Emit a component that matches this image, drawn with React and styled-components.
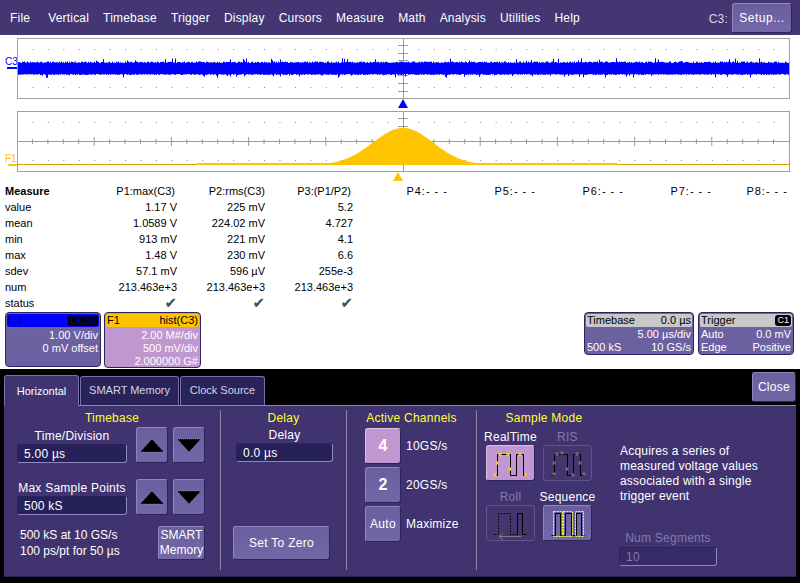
import styled, { createGlobalStyle, css } from "styled-components";

const GlobalStyle = createGlobalStyle`
    html, body {
        margin: 0;
        background: #000;
    }
    * {
        box-sizing: border-box;
    }
`;

const bevel = css`
    border: 1px solid;
    border-color: #8f86bd #2c2460 #2c2460 #8f86bd;
    border-radius: 3px;
    background: linear-gradient(#6a5e9e, #7268a8);
    color: #fff;
    font: 12px "Liberation Sans", Arial, sans-serif;
    letter-spacing: 0.3px;
    padding: 0;
`;

const Screen = styled.div`
    width: 800px;
    height: 583px;
    overflow: hidden;
    display: flex;
    flex-direction: column;
    background: #000;
    font-family: "Liberation Sans", Arial, sans-serif;
`;

const MenuBar = styled.div`
    height: 35px;
    display: flex;
    align-items: center;
    padding: 0 8px 0 10px;
    gap: 14px;
    background: #433672;
    color: #fff;
    font-size: 12px;
    letter-spacing: 0.2px;
`;

const MenuItem = styled.span`
    margin-right: ${(p) => (p.$first ? "4px" : "0")};
`;

const ChannelLabel = styled.span`
    margin-left: auto;
    margin-right: -10px;
    margin-top: 3px;
    color: #d8d4ea;
`;

const SetupButton = styled.button`
    ${bevel}
    width: 60px;
    height: 30px;
    font-size: 12px;
    letter-spacing: 0.5px;
`;

const Scope = styled.div`
    height: 334px;
    display: flex;
    flex-direction: column;
    background: #fff;
`;

const PlotRow = styled.div`
    height: 61px;
    margin-top: ${(p) => p.$top || 0}px;
    display: flex;
`;

const Gutter = styled.div`
    width: 17px;
    display: flex;
    flex-direction: column;
    align-items: flex-end;
    padding-top: ${(p) => p.$top}px;
    color: ${(p) => p.$color};
    font-size: 10px;
    line-height: 11px;
`;

const GutterName = styled.span`
    width: 12px;
`;

const GutterDash = styled.i`
    display: block;
    width: ${(p) => p.$width}px;
    height: 2px;
    background: ${(p) => p.$color};
`;

const MarkerRow = styled.div`
    height: ${(p) => p.$height}px;
    padding-left: ${(p) => p.$left}px;
    line-height: 0;
`;

const MeasureGrid = styled.div`
    display: grid;
    grid-template-columns: 84px 88px 88px 88px 95px 88px 88px 88px 76px;
    grid-auto-rows: 16px;
    align-items: center;
    padding-left: 5px;
    color: #000;
    font-size: 11px;
`;

const Cell = styled.div`
    text-align: ${(p) => (p.$label ? "left" : "right")};
    font-weight: ${(p) => (p.$bold ? 700 : 400)};
    padding-right: ${(p) => (p.$pad ? "2px" : "0")};
    letter-spacing: ${(p) => (p.$empty ? "1px" : "0")};
    white-space: nowrap;
`;

const RowRest = styled.span`
    grid-column: span 5;
`;

const Tick = styled.span`
    color: #4a4a4a;
    font: 15px/16px "DejaVu Sans", sans-serif;
`;

const Descriptors = styled.div`
    display: flex;
    gap: 3px;
    margin-top: 1px;
    padding: 0 6px 0 5px;
`;

const Descriptor = styled.div`
    width: ${(p) => p.$width}px;
    height: ${(p) => p.$height}px;
    margin-left: ${(p) => (p.$push ? "auto" : "0")};
    margin-right: ${(p) => (p.$gap ? "1px" : "0")};
    border: 1px solid #2c2460;
    border-radius: 4px;
    padding: 1px;
    background: ${(p) => (p.$math ? "#c197cf" : "linear-gradient(#6f649f, #6a5fa0)")};
    color: #fff;
    font-size: 11px;
    line-height: 13px;
`;

const DescriptorHead = styled.div`
    height: 13px;
    display: flex;
    justify-content: space-between;
    align-items: center;
    padding: 0 1px;
    border-radius: 2px;
    background: ${(p) => p.$bg};
    color: ${(p) => p.$color};
    margin-bottom: ${(p) => p.$gap || 0}px;
`;

const Badge = styled.span`
    padding: 0 2px;
    border-radius: 3px;
    background: #000;
    color: ${(p) => p.$color};
    font-size: ${(p) => p.$size || 10}px;
    line-height: 11px;
`;

const DescriptorLine = styled.div`
    display: flex;
    justify-content: ${(p) => (p.$split ? "space-between" : "flex-end")};
    padding: 0 1px;
    white-space: nowrap;
`;

const Dock = styled.div`
    flex: 1;
    display: flex;
    flex-direction: column;
    padding: 0 4px 6px;
`;

const TabRow = styled.div`
    height: 36px;
    display: flex;
    align-items: flex-end;
    gap: 1px;
`;

const Tab = styled.div`
    width: ${(p) => p.$width}px;
    height: ${(p) => (p.$active ? 31 : 29)}px;
    display: flex;
    align-items: center;
    justify-content: center;
    padding-bottom: ${(p) => (p.$active ? 1 : 2)}px;
    border: 1px solid #7a70aa;
    border-bottom: 0;
    border-radius: 3px 3px 0 0;
    background: ${(p) => (p.$active ? "#403370" : "#2a2359")};
    color: ${(p) => (p.$active ? "#fff" : "#d6d2e6")};
    font-size: 11px;
    margin-bottom: ${(p) => (p.$active ? "-1px" : "0")};
    position: relative;
    z-index: ${(p) => (p.$active ? 1 : 0)};
`;

const CloseButton = styled.button`
    ${bevel}
    width: 44px;
    height: 30px;
    margin-left: auto;
    margin-bottom: 3px;
`;

const Panel = styled.div`
    height: 172px;
    display: flex;
    border-top: 1px solid #8f86bd;
    border-bottom: 1px solid #2a2359;
    background: #403370;
    color: #fff;
    font-size: 12px;
    letter-spacing: 0.25px;
`;

const Section = styled.div`
    width: ${(p) => p.$width}px;
    display: flex;
    flex-direction: column;
    padding-top: 5px;
`;

const Divider = styled.div`
    width: 1px;
    margin: 4px 0 6px;
    background: #8f86a8;
`;

const Title = styled.div`
    height: 14px;
    line-height: 14px;
    text-align: center;
    color: #ffff33;
`;

const TimeRow = styled.div`
    display: flex;
    gap: 9px;
    margin-top: ${(p) => p.$top}px;
    padding-left: 13px;
`;

const Field = styled.div`
    width: ${(p) => p.$width || 110}px;
    display: flex;
    flex-direction: column;
    justify-content: flex-end;
    text-align: center;
    color: ${(p) => (p.$off ? "#8479ad" : "#fff")};
`;

const FieldName = styled.div`
    line-height: 14px;
    margin-bottom: ${(p) => p.$gap || 1}px;
`;

const FieldBox = styled.div`
    height: 19px;
    padding: 0 6px;
    line-height: 18px;
    text-align: left;
    border: 1px solid;
    border-color: #2a2359 #8f86bd #8f86bd #2a2359;
    border-radius: 3px;
    background: ${(p) => (p.$off ? "#372b68" : "#27215a")};
    color: ${(p) => (p.$off ? "#8479ad" : "#fff")};
`;

const StepGroup = styled.div`
    display: flex;
    gap: 5px;
`;

const StepButton = styled.button`
    ${bevel}
    width: 32px;
    height: 36px;
    display: flex;
    align-items: center;
    justify-content: center;
`;

const InfoRow = styled.div`
    display: flex;
    justify-content: space-between;
    align-items: center;
    margin-top: 11px;
    padding: 0 15px 0 16px;
    font-size: 12px;
    line-height: 16px;
    letter-spacing: 0;
`;

const SmartButton = styled.button`
    ${bevel}
    width: 47px;
    height: 34px;
    line-height: 15px;
    letter-spacing: 0;
`;

const DelayField = styled.div`
    margin: 3px 0 0 15px;
`;

const ZeroButton = styled.button`
    ${bevel}
    width: 97px;
    height: 34px;
    margin: auto 0 16px 12px;
`;

const ChannelList = styled.div`
    display: flex;
    flex-direction: column;
    gap: 3px;
    margin-top: 3px;
    padding-left: 18px;
`;

const ChannelRow = styled.div`
    display: flex;
    align-items: center;
    gap: 5px;
`;

const ChannelButton = styled.button`
    ${bevel}
    width: 36px;
    height: 36px;
    font-size: ${(p) => (p.$big ? "16px" : "12px")};
    font-weight: ${(p) => (p.$big ? 700 : 400)};
    ${(p) => p.$active && css`
        background: #c197cf;
        border-color: #d9c2e2 #2c2460 #2c2460 #d9c2e2;
    `}
`;

const ModeGrid = styled.div`
    display: grid;
    grid-template-columns: 49px 49px;
    column-gap: 8px;
    row-gap: 9px;
    margin-top: 5px;
    padding-left: 9px;
`;

const Mode = styled.div`
    display: flex;
    flex-direction: column;
    align-items: center;
    color: ${(p) => (p.$off ? "#8479ad" : "#fff")};
    white-space: nowrap;
`;

const ModeName = styled.div`
    line-height: 14px;
    margin-bottom: 1px;
`;

const ModeButton = styled.button`
    ${bevel}
    width: 49px;
    height: 36px;
    line-height: 0;
    ${(p) => p.$active && css`
        background: #c197cf;
        border-color: #d9c2e2 #2c2460 #2c2460 #d9c2e2;
    `}
    ${(p) => p.$off && css`
        background: #43366f;
        border-color: #5f5490;
    `}
`;

const Describe = styled.div`
    padding: 33px 0 0 9px;
    line-height: 15px;
    letter-spacing: 0.2px;
    white-space: nowrap;
`;

const SegmentField = styled.div`
    margin: 27px 0 0 8px;
`;

const rows = [
    ["value", "1.17 V", "225 mV", "5.2"],
    ["mean", "1.0589 V", "224.02 mV", "4.727"],
    ["min", "913 mV", "221 mV", "4.1"],
    ["max", "1.48 V", "230 mV", "6.6"],
    ["sdev", "57.1 mV", "596 µV", "255e-3"],
    ["num", "213.463e+3", "213.463e+3", "213.463e+3"],
];

const menus = ["File", "Vertical", "Timebase", "Trigger", "Display", "Cursors", "Measure", "Math", "Analysis", "Utilities", "Help"];

// fixed seed so the noise is the same on every load
let seed = 7;
const rand = () => {
    seed = (seed * 16807) % 2147483647;
    return seed / 2147483647;
};

const noisePath = (() => {
    let d = "";
    for (let x = 0; x < 772; x += 1) {
        const up = rand() < 0.05 ? 2 + rand() * 3 : rand() * 1.6;
        const down = rand() < 0.05 ? 1 + rand() * 3 : rand() * 1;
        d += `M${x + 0.5} ${25 - up}V${36 + down}`;
    }
    return d;
})();

const histPath = (() => {
    let d = "M180 54";
    for (let x = 180; x <= 600; x += 2) {
        const h = 37 * Math.exp(-((x - 386) ** 2) / (2 * 30 * 30));
        d += `L${x} ${Math.min(52, 54 - h).toFixed(1)}`;
    }
    return `${d}L600 54Z`;
})();

function Ticks({ rowsAt, axis }) {
    const dots = [];
    for (let i = 1; i < 50; i += 1) {
        if (i % 25 === 0) continue;
        rowsAt.forEach((y) => dots.push(<rect key={`${i}-${y}`} x={i * 15.44} y={y} width="1" height="1" fill="#8a8a8a" />));
    }
    const marks = [];
    for (let y = 7; y < 60; y += 7.6) {
        marks.push(<line key={y} x1="381" x2="391" y1={Math.round(y) + 0.5} y2={Math.round(y) + 0.5} stroke="#9a9a9a" />);
    }
    const axisMarks = [];
    if (axis) {
        for (let i = 1; i < 50; i += 1) {
            const tall = i % 5 === 0;
            axisMarks.push(<line key={i} x1={i * 15.44} x2={i * 15.44} y1={tall ? 26 : 28} y2={tall ? 35 : 33} stroke="#9a9a9a" />);
        }
    }
    return (
        <>
            {dots}
            {axis && <line x1="0" x2="773" y1="30.5" y2="30.5" stroke="#9a9a9a" />}
            {axisMarks}
            <line x1="386.5" x2="386.5" y1="0" y2="61" stroke="#9a9a9a" />
            {marks}
        </>
    );
}

function Plot({ children, rowsAt, axis }) {
    return (
        <svg width="773" height="61" viewBox="0 0 773 61">
            <Ticks rowsAt={rowsAt} axis={axis} />
            {children}
            <rect x="0.5" y="0.5" width="772" height="60" fill="none" stroke="#a0a0a0" />
        </svg>
    );
}

function StepIcon({ down }) {
    return (
        <svg width="26" height="15" viewBox="0 0 26 15">
            <polygon
                points={down ? "1,1 25,1 13,14" : "13,1 25,14 1,14"}
                fill="#000"
                stroke="#b8b4c8"
                strokeWidth="0.5"
                strokeDasharray="1 1"
            />
        </svg>
    );
}

const wave = "M7.5 29.5H10.5V8.5H23.5V29.5H29.5V8.5H36.5V29.5H40.5";

function Squares({ points, fill }) {
    return points.map(([x, y]) => <rect key={`${x}-${y}`} x={x - 1.5} y={y - 1.5} width="3" height="3" fill={fill} />);
}

function RealTimeIcon() {
    return (
        <svg width="47" height="34" viewBox="0 0 47 34">
            <path d={wave} fill="none" stroke="#000" />
            <Squares points={[[13, 8], [21, 8], [33, 8], [10, 17], [23, 23], [8, 29], [39, 29]]} fill="#ffc81e" />
        </svg>
    );
}

function RisIcon() {
    return (
        <svg width="47" height="34" viewBox="0 0 47 34">
            <path d={wave} fill="none" stroke="#000" />
            <Squares points={[[13, 8], [18, 7], [33, 8], [10, 17], [23, 23], [29, 29], [36, 17], [40, 28], [10, 28]]} fill="#6f6f6f" />
        </svg>
    );
}

function RollIcon() {
    return (
        <svg width="47" height="34" viewBox="0 0 47 34">
            <path d="M7.5 28.5H11.5V7.5H23.5V28.5H29.5" fill="none" stroke="#000" strokeDasharray="1.5 1.5" />
            <path d="M29.5 28.5H30.5V7.5H35.5V28.5H39.5" fill="none" stroke="#000" />
            <path d="M12 30.5H34M16 27.5L12 30.5L16 33.5" fill="none" stroke="#7d7d7d" />
        </svg>
    );
}

function SequenceIcon() {
    return (
        <svg width="47" height="34" viewBox="0 0 47 34">
            <path d="M7.5 29.5H11.5V7.5H16.5V29.5H21.5V7.5H27.5V29.5H32.5V7.5H37.5V29.5H40.5" fill="none" stroke="#000" />
            <path d="M9.5 5.5H18.5V30.5H9.5ZM19.5 5.5H28.5V30.5H19.5ZM31.5 5.5H39.5V30.5H31.5Z" fill="none" stroke="#ffff33" strokeDasharray="2 1" />
        </svg>
    );
}

function App() {
    return (
        <Screen>
            <GlobalStyle />
            <MenuBar>
                {menus.map((name, i) => (
                    <MenuItem key={name} $first={i === 0}>{name}</MenuItem>
                ))}
                <ChannelLabel>C3:</ChannelLabel>
                <SetupButton>Setup...</SetupButton>
            </MenuBar>

            <Scope>
                <PlotRow $top={3}>
                    <Gutter $top={18} $color="#0000ff">
                        <GutterName>C3</GutterName>
                        <GutterDash $width={10} $color="#0000ff" />
                    </Gutter>
                    <Plot rowsAt={[11, 49]}>
                        <path d={noisePath} stroke="#0000ff" fill="none" />
                    </Plot>
                </PlotRow>
                <MarkerRow $height={12} $left={398}>
                    <svg width="10" height="9" viewBox="0 0 10 9"><polygon points="5,0 10,9 0,9" fill="#0000ff" /></svg>
                </MarkerRow>
                <PlotRow>
                    <Gutter $top={42} $color="#ffc400">
                        <GutterName>F1</GutterName>
                        <GutterDash $width={9} $color="#ffc400" />
                    </Gutter>
                    <Plot rowsAt={[11, 49]} axis>
                        <path d="M0 53.5H773" stroke="#d8a000" fill="none" />
                        <path d={histPath} fill="#ffc400" />
                    </Plot>
                </PlotRow>
                <MarkerRow $height={11} $left={393}>
                    <svg width="10" height="9" viewBox="0 0 10 9"><polygon points="5,0 10,9 0,9" fill="#ffc400" /></svg>
                </MarkerRow>

                <MeasureGrid>
                    <Cell $label $bold>Measure</Cell>
                    <Cell $pad>P1:max(C3)</Cell>
                    <Cell>P2:rms(C3)</Cell>
                    <Cell $pad>P3:(P1/P2)</Cell>
                    <Cell $empty>P4:- - -</Cell>
                    <Cell $empty>P5:- - -</Cell>
                    <Cell $empty>P6:- - -</Cell>
                    <Cell $empty>P7:- - -</Cell>
                    <Cell $empty>P8:- - -</Cell>
                    {rows.map((row) => [
                        <Cell $label key={row[0]}>{row[0]}</Cell>,
                        <Cell key={`${row[0]}1`}>{row[1]}</Cell>,
                        <Cell key={`${row[0]}2`}>{row[2]}</Cell>,
                        <Cell key={`${row[0]}3`}>{row[3]}</Cell>,
                        <RowRest key={`${row[0]}4`} />,
                    ])}
                    <Cell $label>status</Cell>
                    <Cell><Tick>✔</Tick></Cell>
                    <Cell><Tick>✔</Tick></Cell>
                    <Cell><Tick>✔</Tick></Cell>
                </MeasureGrid>

                <Descriptors>
                    <Descriptor $width={96} $height={55}>
                        <DescriptorHead $bg="#0000ff" $color="#000090" $gap={2}>
                            <span>C3</span>
                            <Badge $color="#0000c0">DC50</Badge>
                        </DescriptorHead>
                        <DescriptorLine>1.00 V/div</DescriptorLine>
                        <DescriptorLine>0 mV offset</DescriptorLine>
                    </Descriptor>
                    <Descriptor $width={97} $height={56} $math>
                        <DescriptorHead $bg="#ffc400" $color="#000" $gap={2}>
                            <span>F1</span>
                            <span>hist(C3)</span>
                        </DescriptorHead>
                        <DescriptorLine>2.00 M#/div</DescriptorLine>
                        <DescriptorLine>500 mV/div</DescriptorLine>
                        <DescriptorLine>2.000000 G#</DescriptorLine>
                    </Descriptor>
                    <Descriptor $width={110} $height={43} $push $gap>
                        <DescriptorHead $bg="#c8c8c8" $color="#000" $gap={1}>
                            <span>Timebase</span>
                            <span>0.0 µs</span>
                        </DescriptorHead>
                        <DescriptorLine>5.00 µs/div</DescriptorLine>
                        <DescriptorLine $split><span>500 kS</span><span>10 GS/s</span></DescriptorLine>
                    </Descriptor>
                    <Descriptor $width={96} $height={43}>
                        <DescriptorHead $bg="#c8c8c8" $color="#000" $gap={1}>
                            <span>Trigger</span>
                            <Badge $color="#fff" $size={9}>C1</Badge>
                        </DescriptorHead>
                        <DescriptorLine $split><span>Auto</span><span>0.0 mV</span></DescriptorLine>
                        <DescriptorLine $split><span>Edge</span><span>Positive</span></DescriptorLine>
                    </Descriptor>
                </Descriptors>
            </Scope>

            <Dock>
                <TabRow>
                    <Tab $width={75} $active>Horizontal</Tab>
                    <Tab $width={99}>SMART Memory</Tab>
                    <Tab $width={85}>Clock Source</Tab>
                    <CloseButton>Close</CloseButton>
                </TabRow>
                <Panel>
                    <Section $width={216}>
                        <Title>Timebase</Title>
                        <TimeRow $top={2}>
                            <Field>
                                <FieldName>Time/Division</FieldName>
                                <FieldBox>5.00 µs</FieldBox>
                            </Field>
                            <StepGroup>
                                <StepButton><StepIcon /></StepButton>
                                <StepButton><StepIcon down /></StepButton>
                            </StepGroup>
                        </TimeRow>
                        <TimeRow $top={16}>
                            <Field>
                                <FieldName>Max Sample Points</FieldName>
                                <FieldBox>500 kS</FieldBox>
                            </Field>
                            <StepGroup>
                                <StepButton><StepIcon /></StepButton>
                                <StepButton><StepIcon down /></StepButton>
                            </StepGroup>
                        </TimeRow>
                        <InfoRow>
                            <div>500 kS at 10 GS/s<br />100 ps/pt for 50 µs</div>
                            <SmartButton>SMART Memory</SmartButton>
                        </InfoRow>
                    </Section>
                    <Divider />
                    <Section $width={125}>
                        <Title>Delay</Title>
                        <DelayField>
                            <Field $width={97}>
                                <FieldName>Delay</FieldName>
                                <FieldBox>0.0 µs</FieldBox>
                            </Field>
                        </DelayField>
                        <ZeroButton>Set To Zero</ZeroButton>
                    </Section>
                    <Divider />
                    <Section $width={129}>
                        <Title>Active Channels</Title>
                        <ChannelList>
                            <ChannelRow><ChannelButton $big $active>4</ChannelButton>10GS/s</ChannelRow>
                            <ChannelRow><ChannelButton $big>2</ChannelButton>20GS/s</ChannelRow>
                            <ChannelRow><ChannelButton>Auto</ChannelButton>Maximize</ChannelRow>
                        </ChannelList>
                    </Section>
                    <Divider />
                    <Section $width={134}>
                        <Title>Sample Mode</Title>
                        <ModeGrid>
                            <Mode>
                                <ModeName>RealTime</ModeName>
                                <ModeButton $active><RealTimeIcon /></ModeButton>
                            </Mode>
                            <Mode $off>
                                <ModeName>RIS</ModeName>
                                <ModeButton $off><RisIcon /></ModeButton>
                            </Mode>
                            <Mode $off>
                                <ModeName>Roll</ModeName>
                                <ModeButton $off><RollIcon /></ModeButton>
                            </Mode>
                            <Mode>
                                <ModeName>Sequence</ModeName>
                                <ModeButton><SequenceIcon /></ModeButton>
                            </Mode>
                        </ModeGrid>
                    </Section>
                    <Section $width={183}>
                        <Describe>
                            Acquires a series of<br />
                            measured voltage values<br />
                            associated with a single<br />
                            trigger event
                        </Describe>
                        <SegmentField>
                            <Field $width={98} $off>
                                <FieldName $gap={2}>Num Segments</FieldName>
                                <FieldBox $off>10</FieldBox>
                            </Field>
                        </SegmentField>
                    </Section>
                </Panel>
            </Dock>
        </Screen>
    );
}

export default App;
